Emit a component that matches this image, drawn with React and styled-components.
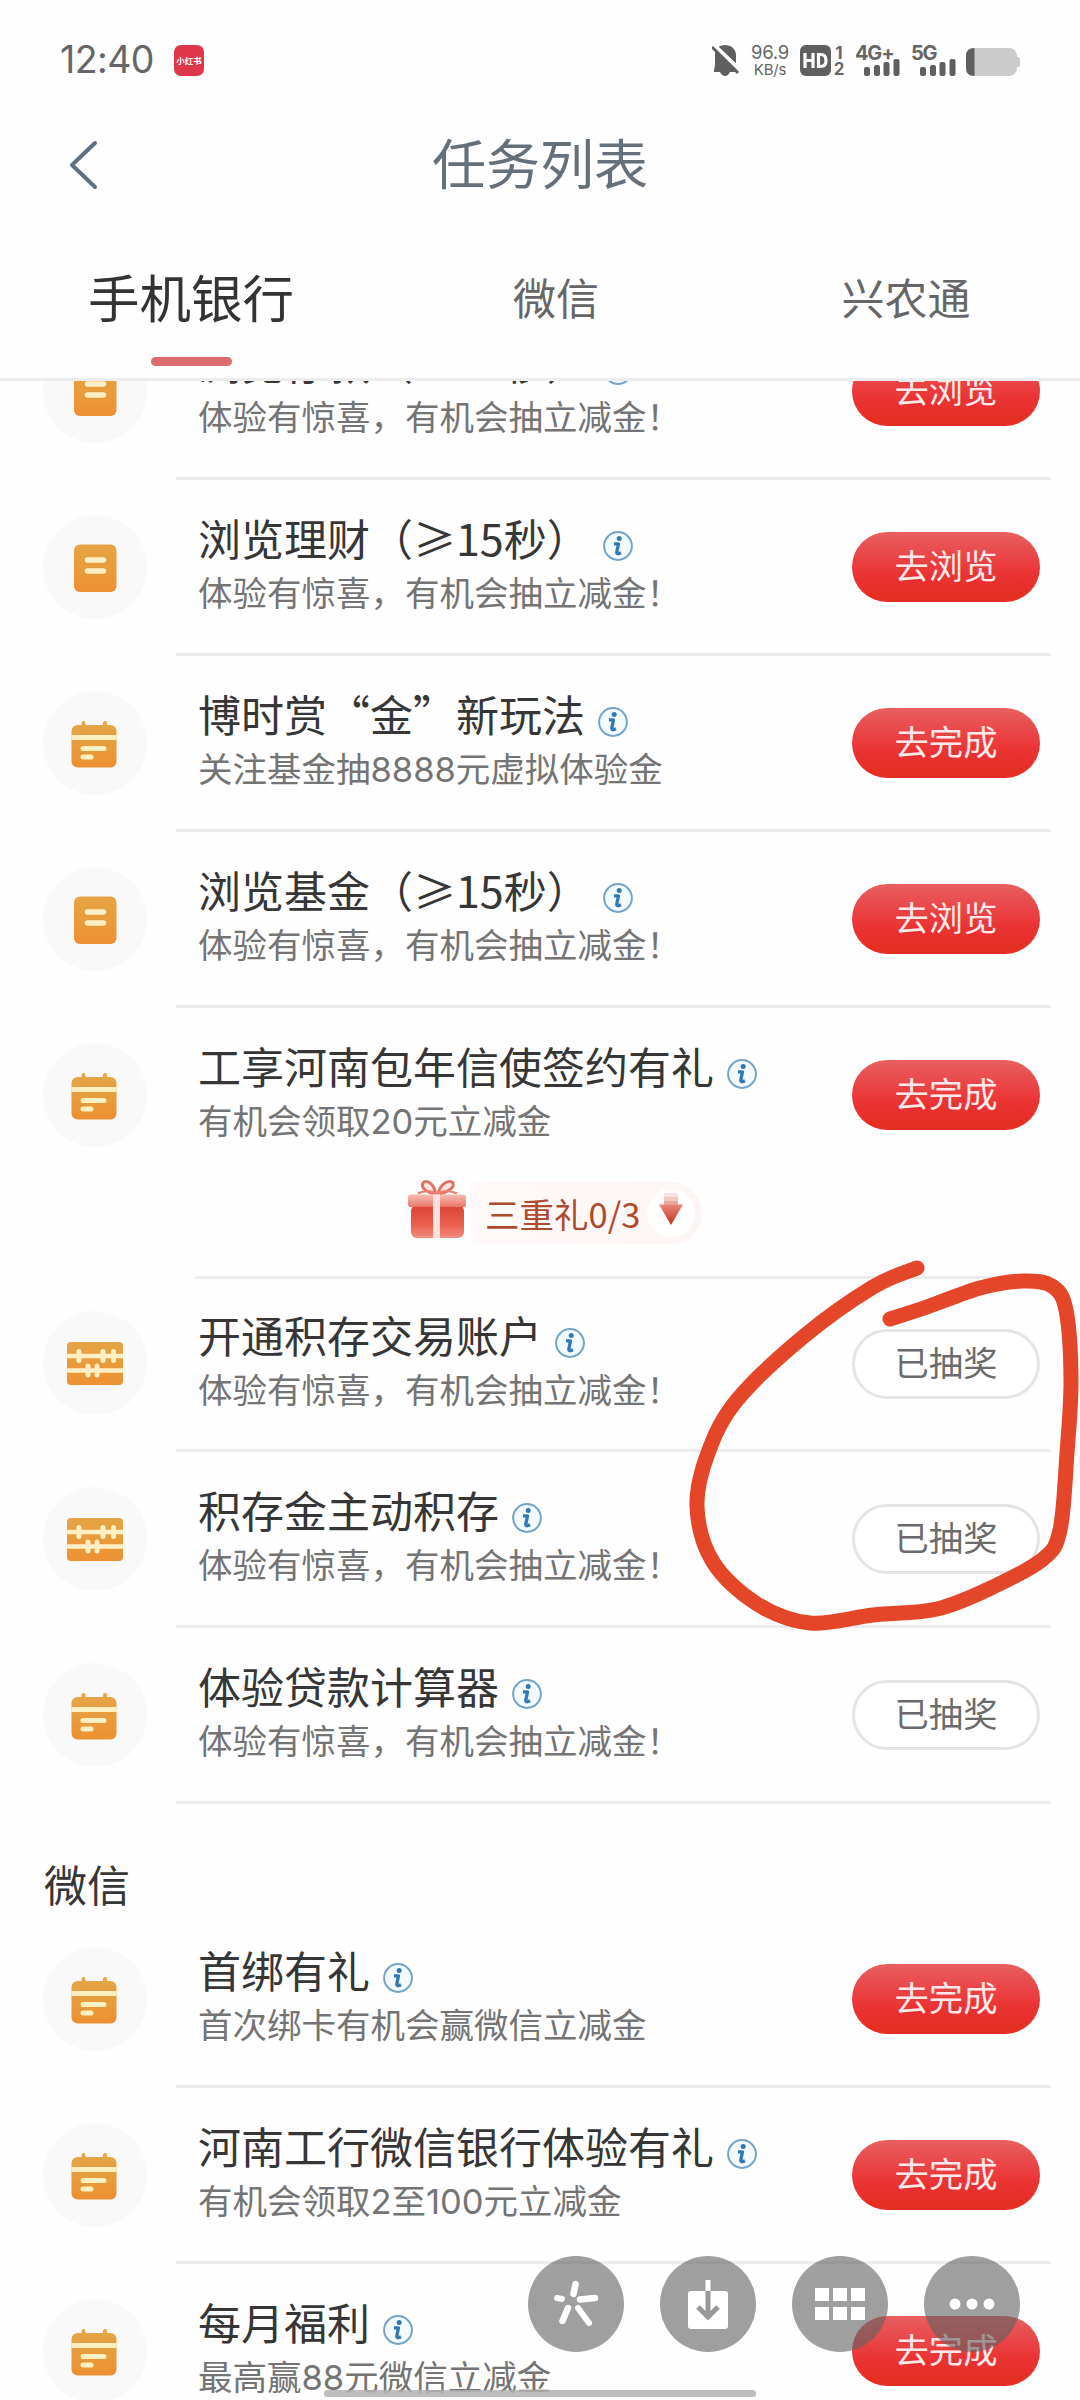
import React from "react";
import styled, { createGlobalStyle, css } from "styled-components";

const cjk = '"Noto Sans CJK SC", "Noto Sans", sans-serif';
const mixed = 'Inter, "Noto Sans CJK SC", sans-serif';

const GlobalStyle = createGlobalStyle`
  * { box-sizing: border-box; }
  body { margin: 0; background: #fefefe; }
`;

const Screen = styled.div`
  position: relative;
  display: flex;
  flex-direction: column;
  width: 1080px;
  height: 2400px;
  overflow: hidden;
  background: #fefefe;
  font-family: ${cjk};
  color: #363636;
`;

const StatusBar = styled.div`
  display: flex;
  align-items: center;
  height: 120px;
  padding: 0 60px 0 60px;
  color: #666;
`;

const Clock = styled.span`
  width: 114px;
  font: 400 37.5px/44px Inter, sans-serif;
  letter-spacing: -0.6px;
`;

const AppBadge = styled.span`
  display: flex;
  align-items: center;
  justify-content: center;
  width: 30px;
  height: 31px;
  border-radius: 7px;
  background: #e0364b;
  color: #fff;
  font: 700 8.5px/10px ${cjk};
  white-space: nowrap;
`;

const StatusIcons = styled.div`
  display: flex;
  margin-left: auto;
  height: 31px;
`;

const StatusSvg = styled.svg`
  display: block;
  width: ${(p) => p.$w}px;
  height: 31px;
  margin-right: ${(p) => p.$gap || 0}px;
`;

const Speed = styled.div`
  display: flex;
  flex-direction: column;
  align-items: center;
  width: 38px;
  height: 36px;
  margin: -3px 11px 0 0;
  font-family: Inter, sans-serif;
  letter-spacing: -0.2px;
`;

const SpeedValue = styled.span`
  font-size: 18.5px;
  line-height: 20px;
`;

const SpeedUnit = styled.span`
  font-size: 15px;
  line-height: 15px;
`;

const Sims = styled.div`
  display: flex;
  flex-direction: column;
  justify-content: space-between;
  align-items: center;
  width: 14px;
  height: 32px;
  margin: 0 9px 0 1px;
  font: 700 17px/16px Inter, sans-serif;
`;

const Signal = styled.div`
  width: ${(p) => p.$w}px;
  font: 700 20px/16px Inter, sans-serif;
  letter-spacing: -1.2px;
  svg { display: block; margin: -2px 0 0 ${(p) => p.$shift}px; }
`;

const NavBar = styled.header`
  display: grid;
  grid-template-columns: 140px 1fr 140px;
  align-items: center;
  height: 88px;
`;

const Back = styled.button`
  display: flex;
  justify-content: flex-start;
  padding: 2px 0 0 67px;
  border: 0;
  background: none;
`;

const Title = styled.h1`
  margin: -5px 0 0;
  text-align: center;
  font-size: 54px;
  line-height: 72px;
  font-weight: 400;
  color: #65707b;
`;

const Tabs = styled.nav`
  display: flex;
  align-items: stretch;
  height: 173px;
  padding: 43px 0 0 64px;
  border-bottom: 3px solid #ececec;
`;

const Tab = styled.div`
  display: flex;
  flex-direction: column;
  align-items: center;
  width: ${(p) => p.$w}px;
  color: ${(p) => (p.$active ? "#333" : "#666")};
  font-size: ${(p) => (p.$active ? 51.5 : 43)}px;
  line-height: 90px;
`;

const Underline = styled.span`
  width: 81px;
  height: 9px;
  margin-top: 16px;
  border-radius: 5px;
  background: #dd6c70;
`;

const List = styled.main`
  flex: 1;
  overflow: hidden;
`;

const Row = styled.section`
  display: grid;
  grid-template-columns: 176px 1fr 29px;
  height: ${(p) => p.$h}px;
  margin-top: ${(p) => p.$lift || 0}px;
`;

const IconCell = styled.div`
  display: flex;
  align-items: flex-end;
  padding: 0 0 37px 43px;
  height: ${(p) => (p.$short ? 173 : 176)}px;
`;

const Disc = styled.span`
  display: flex;
  align-items: center;
  justify-content: center;
  width: 104px;
  height: 104px;
  border-radius: 50%;
  background: #f9f9f9;
`;

const Content = styled.div`
  display: flex;
  flex-direction: column;
  justify-content: space-between;
`;

const Main = styled.div`
  display: flex;
  align-items: center;
  height: ${(p) => (p.$short ? 169 : 173)}px;
  padding-left: 22px;
`;

const Texts = styled.div`
  flex: 1;
  min-width: 0;
`;

const Headline = styled.div`
  display: flex;
  align-items: center;
  gap: 13px;
  height: 56px;
  margin-top: -3px;
  font-size: 43px;
  line-height: 56px;
  white-space: nowrap;
  svg { margin-top: 18px; }
`;

const Sub = styled.div`
  height: 54px;
  margin-top: 2px;
  font-family: ${mixed};
  font-size: 34.5px;
  line-height: 54px;
  color: #747474;
  white-space: nowrap;
`;

const Pill = styled.button`
  display: flex;
  align-items: center;
  justify-content: center;
  width: 188px;
  height: 70px;
  margin: 0 11px 0 0;
  padding: 0 0 5px;
  border: 0;
  border-radius: 35px;
  font: 400 34.3px/50px ${cjk};
  ${(p) =>
    p.$done
      ? css`
          border: 3px solid #e4e4e4;
          background: #fff;
          color: #6b6b6b;
        `
      : css`
          background: linear-gradient(#e8605f 0%, #e94a4c 28%, #ea3233 62%, #e42f20 100%);
          color: #ffe9ea;
        `}
`;

const Divider = styled.div`
  height: 3px;
  margin-left: ${(p) => p.$inset || 0}px;
  background: #ededed;
`;

const GiftLine = styled.div`
  display: flex;
  align-items: center;
  height: 70px;
  margin: -6px 0 26px 231px;
  svg:first-child { margin-bottom: 7px; }
`;

const GiftTag = styled.div`
  display: flex;
  align-items: center;
  width: 232px;
  height: 62px;
  margin-left: 3px;
  padding-left: 15px;
  border-radius: 4px 31px 31px 4px;
  background: linear-gradient(90deg, #fef9f8, #fcf5f4);
  color: #b04a2e;
  font-size: 34.5px;
  line-height: 50px;
`;

const Knob = styled.span`
  display: flex;
  align-items: center;
  justify-content: center;
  width: 48px;
  height: 48px;
  margin-left: auto;
  margin-right: 7px;
  border-radius: 50%;
  background: #fff;
`;

const GroupName = styled.h2`
  height: 108px;
  margin: 0;
  padding: 51px 0 0 44px;
  font-size: 43px;
  line-height: 56px;
  font-weight: 400;
`;

const Scribble = styled.svg`
  position: absolute;
  left: 680px;
  top: 1250px;
  pointer-events: none;
`;

const Floating = styled.div`
  position: absolute;
  left: 528px;
  top: 2256px;
  display: flex;
  gap: 36px;
`;

const Round = styled.span`
  display: flex;
  align-items: center;
  justify-content: center;
  width: 96px;
  height: 96px;
  border-radius: 50%;
  background: rgba(98, 98, 98, 0.61);
`;

const HomeBar = styled.div`
  position: absolute;
  left: 324px;
  top: 2390px;
  width: 432px;
  height: 7px;
  border-radius: 4px;
  background: rgba(178, 178, 178, 0.85);
`;

function Amber() {
  return (
    <defs>
      <linearGradient id="amber" x1="0" y1="0" x2="0" y2="1">
        <stop offset="0" stopColor="#e5a446" />
        <stop offset="1" stopColor="#ec9132" />
      </linearGradient>
    </defs>
  );
}

function DocIcon() {
  return (
    <svg width="60" height="60" viewBox="0 0 60 60">
      <Amber />
      <rect x="9" y="7.500" width="42.500" height="47.500" rx="6" fill="url(#amber)" />
      <path d="M22.500 23H38.500M22.500 34H38.500" stroke="#fff0c4" strokeWidth="5.500" strokeLinecap="round" />
    </svg>
  );
}

function CalendarIcon() {
  return (
    <svg width="60" height="60" viewBox="0 0 60 60">
      <Amber />
      <path d="M18.500 10V14M40 10V14" stroke="#e5a648" strokeWidth="4" strokeLinecap="round" />
      <rect x="6.500" y="12" width="45" height="42.500" rx="6" fill="url(#amber)" />
      <rect x="6.500" y="22" width="45" height="5" fill="#fff0c4" />
      <path d="M18 35.500H39M18 44H26" stroke="#fff0c4" strokeWidth="5" strokeLinecap="round" />
    </svg>
  );
}

function AbacusIcon() {
  return (
    <svg width="60" height="60" viewBox="0 0 60 60">
      <Amber />
      <rect x="2" y="9" width="56" height="43" rx="4" fill="url(#amber)" />
      <path d="M2 23H58M2 37.500H58" stroke="#fff0c4" strokeWidth="4.500" />
      <path
        d="M14 18.500V27.500M38 18.500V27.500M48.500 18.500V27.500M23 33V42M32 33V42"
        stroke="#fff0c4"
        strokeWidth="5"
        strokeLinecap="round"
      />
    </svg>
  );
}

const icons = { doc: DocIcon, cal: CalendarIcon, abacus: AbacusIcon };

function Info() {
  return (
    <svg width="30" height="30" viewBox="0 0 30 30">
      <circle cx="15" cy="15" r="13.900" fill="#f3fafe" stroke="#74a5c8" strokeWidth="2" />
      <circle cx="16.200" cy="7.500" r="2.500" fill="#3577b5" />
      <path
        d="M11 12.800H15.500L13.800 21Q13.500 24 18 21.800"
        fill="none"
        stroke="#3577b5"
        strokeWidth="3.300"
        strokeLinejoin="round"
      />
    </svg>
  );
}

function GiftIcon() {
  return (
    <svg width="60" height="60" viewBox="0 0 60 62" preserveAspectRatio="none">
      <defs>
        <linearGradient id="box" x1="0" y1="0" x2="0" y2="1">
          <stop offset="0" stopColor="#dd4334" />
          <stop offset="0.6" stopColor="#ea5f50" />
          <stop offset="1" stopColor="#f08d80" />
        </linearGradient>
        <linearGradient id="lid" x1="0" y1="0" x2="0" y2="1">
          <stop offset="0" stopColor="#f5bdb4" />
          <stop offset="1" stopColor="#ea7668" />
        </linearGradient>
      </defs>
      <path d="M29 16C27 4 19 0 16 4C13 9 20 14 29 16Z" fill="#fbe3de" stroke="#df7264" strokeWidth="3" />
      <path d="M31 16C33 4 43 0 46 4C48 9 40 14 31 16Z" fill="#fbe3de" stroke="#df7264" strokeWidth="3" />
      <path d="M11 15Q20 10 30 15Q40 10 50 15" fill="none" stroke="#e78073" strokeWidth="2.500" />
      <rect x="4" y="27" width="53" height="34" rx="6" fill="url(#box)" />
      <rect x="1" y="16" width="58" height="13" rx="3" fill="url(#lid)" />
      <rect x="26" y="16" width="7" height="45" fill="#fbe1dc" />
    </svg>
  );
}

function Task({ icon, title, sub, action, done, short, lift, gift, inset }) {
  const Icon = icons[icon];
  const height = gift ? 271 : short ? 173 : 176;
  return (
    <Row $h={height} $lift={lift}>
      <IconCell $short={short}>
        <Disc>
          <Icon />
        </Disc>
      </IconCell>
      <Content>
        <Main $short={short}>
          <Texts>
            <Headline>
              {title}
              <Info />
            </Headline>
            <Sub>{sub}</Sub>
          </Texts>
          <Pill $done={done}>{action}</Pill>
        </Main>
        {gift && (
          <GiftLine>
            <GiftIcon />
            <GiftTag>
              {gift}
              <Knob>
                <svg width="26" height="34" viewBox="0 0 26 34">
                  <defs>
                    <linearGradient id="arrow" x1="0" y1="0" x2="0" y2="1">
                      <stop offset="0" stopColor="#e8887a" />
                      <stop offset="1" stopColor="#c42f1b" />
                    </linearGradient>
                  </defs>
                  <rect x="6" y="1" width="14" height="4" fill="#f8e2df" />
                  <rect x="6" y="5" width="14" height="4" fill="#f3c9c3" />
                  <rect x="6" y="9" width="14" height="4" fill="#eba79c" />
                  <path d="M1 12.500H25L13 33Z" fill="url(#arrow)" />
                </svg>
              </Knob>
            </GiftTag>
          </GiftLine>
        )}
        <Divider $inset={inset} />
      </Content>
    </Row>
  );
}

function Bars() {
  return (
    <svg width="36" height="17" viewBox="0 0 36 17">
      <g fill="#5f5f5f">
        <rect x="0" y="8" width="6" height="9" rx="2" />
        <rect x="10" y="6" width="6" height="11" rx="2" />
        <rect x="19.500" y="3" width="6" height="14" rx="2" />
        <rect x="29.500" y="0" width="6" height="17" rx="2" />
      </g>
    </svg>
  );
}

const strokePoints = [
  [917, 1268], [873, 1287], [803, 1337], [737, 1400], [708, 1453], [697, 1507], [713, 1562],
  [757, 1604], [810, 1623], [873, 1615], [937, 1609], [993, 1587], [1043, 1559], [1060, 1530],
  [1067, 1453], [1071, 1380], [1066, 1310], [1052, 1286], [1023, 1281], [980, 1288], [927, 1307],
  [890, 1319],
];

function smoothPath(points) {
  let d = `M${points[0].join(" ")}`;
  for (let i = 0; i < points.length - 1; i++) {
    const p0 = points[i - 1] || points[i];
    const p1 = points[i];
    const p2 = points[i + 1];
    const p3 = points[i + 2] || p2;
    d += `C${p1[0] + (p2[0] - p0[0]) / 6} ${p1[1] + (p2[1] - p0[1]) / 6} ${p2[0] - (p3[0] - p1[0]) / 6} ${
      p2[1] - (p3[1] - p1[1]) / 6
    } ${p2[0]} ${p2[1]}`;
  }
  return d;
}

const mobileTasks = [
  { icon: "doc", title: "浏览存款（≥15秒）", sub: "体验有惊喜，有机会抽立减金！", action: "去浏览", lift: -77 },
  { icon: "doc", title: "浏览理财（≥15秒）", sub: "体验有惊喜，有机会抽立减金！", action: "去浏览" },
  { icon: "cal", title: "博时赏“金”新玩法", sub: "关注基金抽8888元虚拟体验金", action: "去完成" },
  { icon: "doc", title: "浏览基金（≥15秒）", sub: "体验有惊喜，有机会抽立减金！", action: "去浏览" },
  { icon: "cal", title: "工享河南包年信使签约有礼", sub: "有机会领取20元立减金", action: "去完成", gift: "三重礼0/3", inset: 19 },
  { icon: "abacus", title: "开通积存交易账户", sub: "体验有惊喜，有机会抽立减金！", action: "已抽奖", done: true, short: true },
  { icon: "abacus", title: "积存金主动积存", sub: "体验有惊喜，有机会抽立减金！", action: "已抽奖", done: true },
  { icon: "cal", title: "体验贷款计算器", sub: "体验有惊喜，有机会抽立减金！", action: "已抽奖", done: true },
];

const wechatTasks = [
  { icon: "cal", title: "首绑有礼", sub: "首次绑卡有机会赢微信立减金", action: "去完成" },
  { icon: "cal", title: "河南工行微信银行体验有礼", sub: "有机会领取2至100元立减金", action: "去完成" },
  { icon: "cal", title: "每月福利", sub: "最高赢88元微信立减金", action: "去完成" },
];

export default function App() {
  return (
    <Screen lang="zh-CN">
      <GlobalStyle />
      <StatusBar>
        <Clock>12:40</Clock>
        <AppBadge>小红书</AppBadge>
        <StatusIcons>
          <StatusSvg $w={27} $gap={12} viewBox="0 0 27 31">
            <path d="M13 0C19 0 24 4 24 10V20L26 25V27H2V25L3 20V10C3 4 7 0 13 0Z" fill="#5f5f5f" />
            <path d="M8 27H18Q16 31 13 31T8 27Z" fill="#5f5f5f" />
            <path d="M1 -1L30 27" stroke="#fefefe" strokeWidth="4" />
            <path d="M0 2L26 28" stroke="#5f5f5f" strokeWidth="2.800" />
          </StatusSvg>
          <Speed>
            <SpeedValue>96.9</SpeedValue>
            <SpeedUnit>KB/s</SpeedUnit>
          </Speed>
          <StatusSvg $w={31} viewBox="0 0 31 31">
            <rect width="31" height="31" rx="6" fill="#5f5f5f" />
            <path d="M5 8V23M13 8V23M5 15.500H13" stroke="#fff" strokeWidth="3.200" fill="none" />
            <path d="M18.500 9.500H21Q26 9.500 26 15.500T21 21.500H18.500Z" stroke="#fff" strokeWidth="3.200" fill="none" />
          </StatusSvg>
          <Sims>
            <span>1</span>
            <span>2</span>
          </Sims>
          <Signal $w={56} $shift={9}>
            4G+
            <Bars />
          </Signal>
          <Signal $w={55} $shift={9}>
            5G
            <Bars />
          </Signal>
          <StatusSvg $w={54} viewBox="0 0 54 31">
            <rect x="0" y="3" width="51" height="28" rx="8" fill="#cbcbcb" />
            <rect x="50" y="12" width="4" height="10" rx="2" fill="#cbcbcb" />
            <path d="M8.500 3V31Q0 31 0 23V11Q0 3 8.500 3Z" fill="#5f5f5f" />
          </StatusSvg>
        </StatusIcons>
      </StatusBar>
      <NavBar>
        <Back aria-label="back">
          <svg width="32" height="52" viewBox="0 0 32 52">
            <path d="M28 4L5 26L28 48" fill="none" stroke="#5f7180" strokeWidth="4" strokeLinecap="round" strokeLinejoin="round" />
          </svg>
        </Back>
        <Title>任务列表</Title>
      </NavBar>
      <Tabs>
        <Tab $w={254} $active>
          手机银行
          <Underline />
        </Tab>
        <Tab $w={476}>微信</Tab>
        <Tab $w={224}>兴农通</Tab>
      </Tabs>
      <List>
        {mobileTasks.map((t) => (
          <Task key={t.title} {...t} />
        ))}
        <GroupName>微信</GroupName>
        {wechatTasks.map((t) => (
          <Task key={t.title} {...t} />
        ))}
      </List>
      <Scribble width="400" height="400" viewBox="680 1250 400 400">
        <path
          d={smoothPath(strokePoints)}
          fill="none"
          stroke="#e34629"
          strokeWidth="15"
          strokeLinecap="round"
          strokeLinejoin="round"
        />
      </Scribble>
      <Floating>
        <Round>
          <svg width="50" height="50" viewBox="0 0 50 50" fill="none" stroke="#fff" strokeLinecap="round">
            <path d="M22.500 15L24.500 5" strokeWidth="6.500" />
            <path d="M29 20.500L44 19" strokeWidth="6.500" />
            <path d="M27 29L38 44" strokeWidth="6" />
            <path d="M17 29L11.500 42" strokeWidth="6.500" />
            <path d="M11 20L6 19" strokeWidth="6" />
          </svg>
        </Round>
        <Round>
          <svg width="50" height="52" viewBox="0 0 50 52">
            <rect x="5" y="13" width="40" height="38" rx="3" fill="#fff" />
            <path d="M25 2V13" stroke="#fff" strokeWidth="5" />
            <path d="M25 13V38M15 29L25 39L35 29" fill="none" stroke="#999" strokeWidth="5" />
          </svg>
        </Round>
        <Round>
          <svg width="52" height="34" viewBox="0 0 52 34" fill="#fff">
            <path d="M1 1h14v13H1zM19 1h14v13H19zM37 1h14v13H37zM1 20h14v13H1zM19 20h14v13H19zM37 20h14v13H37z" />
          </svg>
        </Round>
        <Round>
          <svg width="50" height="14" viewBox="0 0 50 14" fill="#fff">
            <circle cx="8" cy="7" r="5.500" />
            <circle cx="25" cy="7" r="5.500" />
            <circle cx="42" cy="7" r="5.500" />
          </svg>
        </Round>
      </Floating>
      <HomeBar />
    </Screen>
  );
}
